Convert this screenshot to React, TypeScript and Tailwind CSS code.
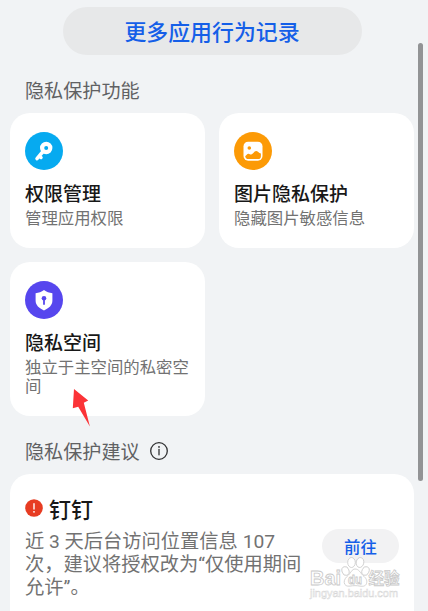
import type { ReactNode } from 'react';

function KeyIcon() {
  return (
    <svg viewBox="0 0 38 38" className="h-[38px] w-[38px]">
      <circle cx="19" cy="19" r="19" fill="#06aaf0" />
      <circle cx="21.2" cy="16" r="4.1" fill="none" stroke="#fff" strokeWidth="4.2" />
      <path d="M18 19.500 12 26.600M14.600 24.200l1.400 1.300" fill="none" stroke="#fff" strokeWidth="3.500" strokeLinecap="round" />
    </svg>
  );
}

function PhotoIcon() {
  return (
    <svg viewBox="0 0 38 38" className="h-[38px] w-[38px]">
      <circle cx="19" cy="19" r="19" fill="#fc9a06" />
      <rect x="9.5" y="9.7" width="19" height="19" rx="4.6" fill="#fff" />
      <circle cx="15.3" cy="16" r="1.8" fill="#fc9a06" />
      <path
        d="M11.200 24.300c1-1.200 2-2.300 3.100-2.500 1.200-.2 1.900 1 3 .8 1.800-.3 2.800-3.400 4.700-3.500 1.700 0 2.700 2 4.900 2.500v2.600c0 1.800-.9 2.900-2.700 2.900h-10c-1.700 0-2.700-.9-3-2.800z"
        fill="#fc9a06"
      />
    </svg>
  );
}

function ShieldIcon() {
  return (
    <svg viewBox="0 0 38 38" className="h-[38px] w-[38px]">
      <circle cx="19" cy="19" r="19" fill="#5646ee" />
      <path
        d="M19 9c2.600 1.900 5.200 2.900 8.400 3.200v7.400c0 4.600-3.400 7.800-8.400 9.800-5-2-8.400-5.200-8.400-9.800v-7.400c3.200-.3 5.800-1.300 8.400-3.200z"
        fill="#fff"
      />
      <circle cx="19" cy="17.300" r="2.300" fill="#5646ee" />
      <path d="M19 18v5" stroke="#5646ee" strokeWidth="1.800" strokeLinecap="round" />
    </svg>
  );
}

function InfoIcon() {
  return (
    <svg viewBox="0 0 20 20" className="h-5 w-5" fill="none" stroke="#303132">
      <circle cx="10" cy="10" r="8.300" strokeWidth="1.300" />
      <path d="M10 8.500v5.300" strokeWidth="1.300" strokeLinecap="round" />
      <circle cx="10" cy="5.900" r=".9" fill="#303132" stroke="none" />
    </svg>
  );
}

function Watermark() {
  return (
    <svg
      viewBox="0 0 96 46"
      className="absolute top-[554px] left-[308px] h-[46px] w-24"
      fill="#fff"
      stroke="#c9c9c9"
      strokeWidth=".8"
    >
      <text x="2" y="31" fontSize="20" textLength="31" lengthAdjust="spacingAndGlyphs" className="font-['Liberation_Sans'] font-bold">
        Bai
      </text>
      <ellipse cx="37.500" cy="17" rx="3.500" ry="4.500" transform="rotate(-18 37.500 17)" />
      <ellipse cx="43.500" cy="8.500" rx="3.800" ry="5" />
      <ellipse cx="52" cy="8.500" rx="3.800" ry="5" transform="rotate(10 52 8.500)" />
      <ellipse cx="57.500" cy="17" rx="3.500" ry="4.500" transform="rotate(22 57.500 17)" />
      <path d="M47 15c4 0 5.500 4 8 6.500 3 2.500 4.500 5 3.500 8-1 3-4 3-6.500 2.600-3.500-.6-6.500-.6-10 0-3 .5-5.500-.6-5.800-3.600-.2-3 2-5.500 4.300-7.500 2.400-2.200 3.500-6 6.500-6z" />
      <text x="40" y="30" fontSize="12.500" textLength="14" lengthAdjust="spacingAndGlyphs" className="font-['Liberation_Sans'] font-bold">
        du
      </text>
      <text x="60.500" y="30" fontSize="15.500" textLength="31" className="font-['Noto_Sans_CJK_SC',sans-serif] font-bold">
        经验
      </text>
      <text x="2" y="43" fontSize="11" strokeWidth=".5" stroke="#d6d6d6" textLength="88" lengthAdjust="spacingAndGlyphs" className="font-['Liberation_Sans']">
        jingyan.baidu.com
      </text>
    </svg>
  );
}

type FeatureCardProps = {
  icon: ReactNode;
  title: string;
  description: string;
};

function FeatureCard({ icon, title, description }: FeatureCardProps) {
  return (
    <div className="rounded-[20px] bg-white pt-[19px] pr-3 pb-[21px] pl-[15px]">
      {icon}
      <h3 className="mt-[10px] text-[19px] leading-[26px] font-medium text-[#181818]">{title}</h3>
      <p className="mt-0.5 text-[16.400px] leading-[19px] text-[#727272]">{description}</p>
    </div>
  );
}

export default function App() {
  return (
    <div className="relative h-[611px] w-[428px] overflow-hidden bg-[#f1f3f5] font-['Noto_Sans_CJK_SC',sans-serif]">
      <main className="flex flex-col pt-[7px] pr-[14px] pl-[10px]">
        <button className="ml-[53px] h-12 w-[299px] rounded-full bg-[#e7e8e9] pr-px text-[21.900px] leading-[48px] font-medium text-[#155fe8]">
          更多应用行为记录
        </button>

        <h2 className="mt-[21px] pl-[15px] text-[19.100px] leading-7 text-[#606163]">隐私保护功能</h2>

        <div className="mt-[9px] grid grid-cols-[195px_195px] gap-[14px]">
          <FeatureCard icon={<KeyIcon />} title="权限管理" description="管理应用权限" />
          <FeatureCard icon={<PhotoIcon />} title="图片隐私保护" description="隐藏图片敏感信息" />
          <FeatureCard icon={<ShieldIcon />} title="隐私空间" description="独立于主空间的私密空间" />
        </div>

        <div className="mt-[21px] flex items-center gap-[9px] pl-[15px]">
          <h2 className="text-[19.100px] leading-7 text-[#606163]">隐私保护建议</h2>
          <InfoIcon />
        </div>

        {/* Advice */}
        <section className="mt-[9px] h-[160px] rounded-[20px] bg-white pt-[19px] pr-[15px] pl-[15px]">
          <div className="flex items-center gap-[6px]">
            <svg viewBox="0 0 18 18" className="h-[18px] w-[18px]">
              <circle cx="9" cy="9" r="8.800" fill="#e73c22" />
              <path d="M9 4.800v5.200" stroke="#fff" strokeWidth="1.400" strokeLinecap="round" />
              <circle cx="9" cy="12.800" r=".9" fill="#fff" />
            </svg>
            <h3 className="text-[22px] leading-[30px] font-medium text-[#181818]">钉钉</h3>
          </div>
          <div className="flex justify-between">
            <p className="mt-[7px] font-[Roboto,'Noto_Sans_CJK_SC',sans-serif] text-[19.250px] leading-[23px] whitespace-nowrap text-[#727272]">
              近 3 天后台访问位置信息 107
              <br />
              次，建议将授权改为“仅使用期间
              <br />
              允许”。
            </p>
            <button className="mt-[6px] h-[34px] w-[77px] shrink-0 rounded-full bg-[#f2f2f3] text-[16.400px] leading-[34px] font-medium text-[#155fe8]">
              前往
            </button>
          </div>
        </section>
      </main>

      {/* Scrollbar */}
      <div className="absolute top-[43px] left-[418px] h-[438px] w-[5px] rounded-full bg-[#929395]" />

      {/* Pointer arrow */}
      <svg viewBox="0 0 20 40" className="absolute top-[388px] left-[72px] h-10 w-5">
        <path d="M2 1 16.200 12.500 11.800 14.700 17.900 38.500 6.200 18.800.8 20.300z" fill="#fb3337" />
      </svg>

      <Watermark />
    </div>
  );
}
